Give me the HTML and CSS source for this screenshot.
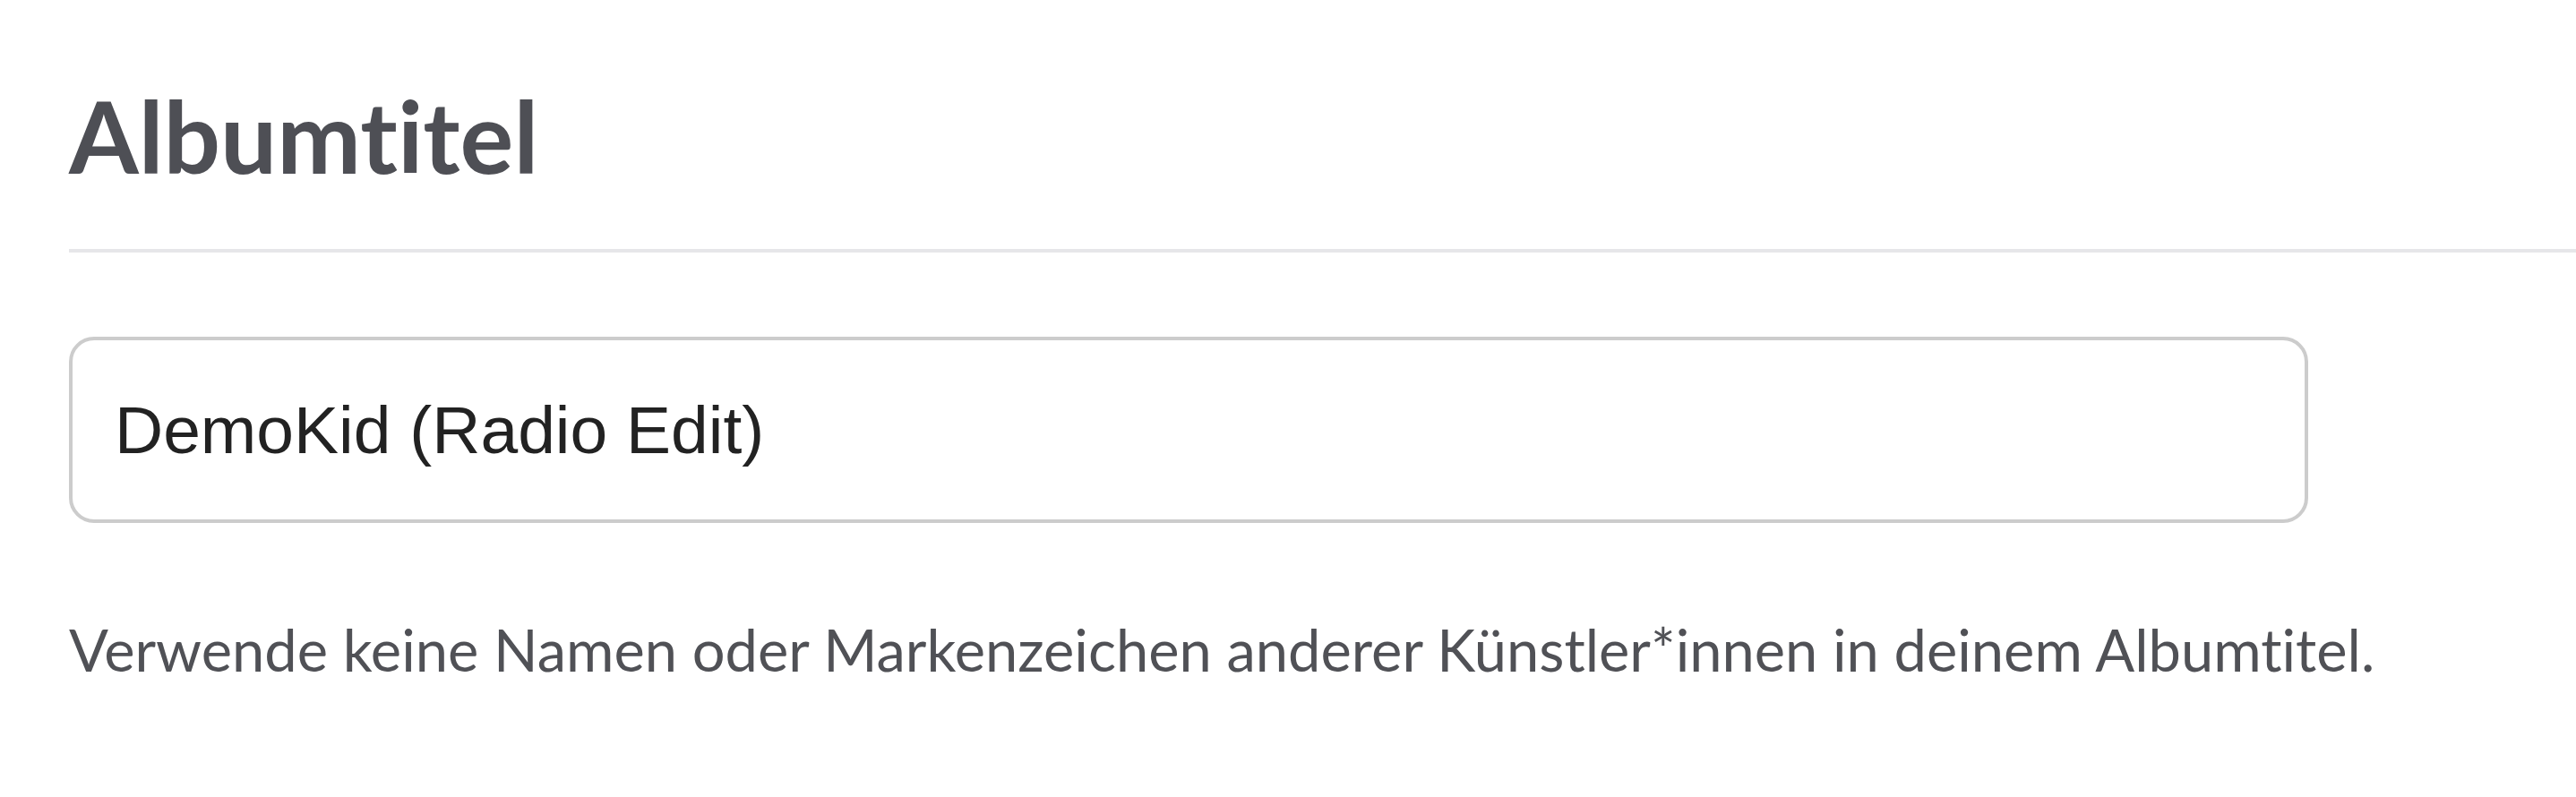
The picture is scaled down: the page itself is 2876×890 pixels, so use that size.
FILE: index.html
```html
<!DOCTYPE html>
<html lang="de">
<head>
<meta charset="utf-8">
<title>Albumtitel</title>
<link rel="stylesheet" href="styles.css">
</head>
<body>
<section class="field">
  <h1 class="field-title">Albumtitel</h1>
  <hr class="field-rule">
  <div class="field-input" role="textbox">DemoKid (Radio Edit)</div>
  <p class="field-help">Verwende keine Namen oder Markenzeichen anderer Künstler*innen in deinem Albumtitel.</p>
</section>
</body>
</html>
```

FILE: styles.css
```css
html, body {
  margin: 0;
  padding: 0;
  background: #ffffff;
}

.field {
  display: flex;
  flex-direction: column;
  padding: 83px 0 0 77px;
  font-variant-ligatures: none;
}

.field-title {
  margin: 0;
  font-family: Lato, "Liberation Sans", sans-serif;
  font-weight: 700;
  font-size: 112px;
  line-height: normal;
  color: #4e4f55;
  font-variant-ligatures: none;
}

.field-rule {
  margin: 60px 0 0 0;
  border: 0;
  height: 4px;
  background: #e6e6e9;
}

.field-input {
  margin-top: 94px;
  box-sizing: border-box;
  width: 2500px;
  height: 208px;
  border: 4px solid #cccccc;
  border-radius: 28px;
  display: flex;
  align-items: center;
  padding: 0 0 0 47px;
  font-family: "Liberation Sans", Arial, sans-serif;
  font-size: 75px;
  color: #222222;
}

.field-help {
  margin: 102px 0 0 0;
  font-family: Lato, "Liberation Sans", sans-serif;
  font-weight: 400;
  font-size: 65px;
  line-height: normal;
  color: #505156;
  font-variant-ligatures: none;
}
```
